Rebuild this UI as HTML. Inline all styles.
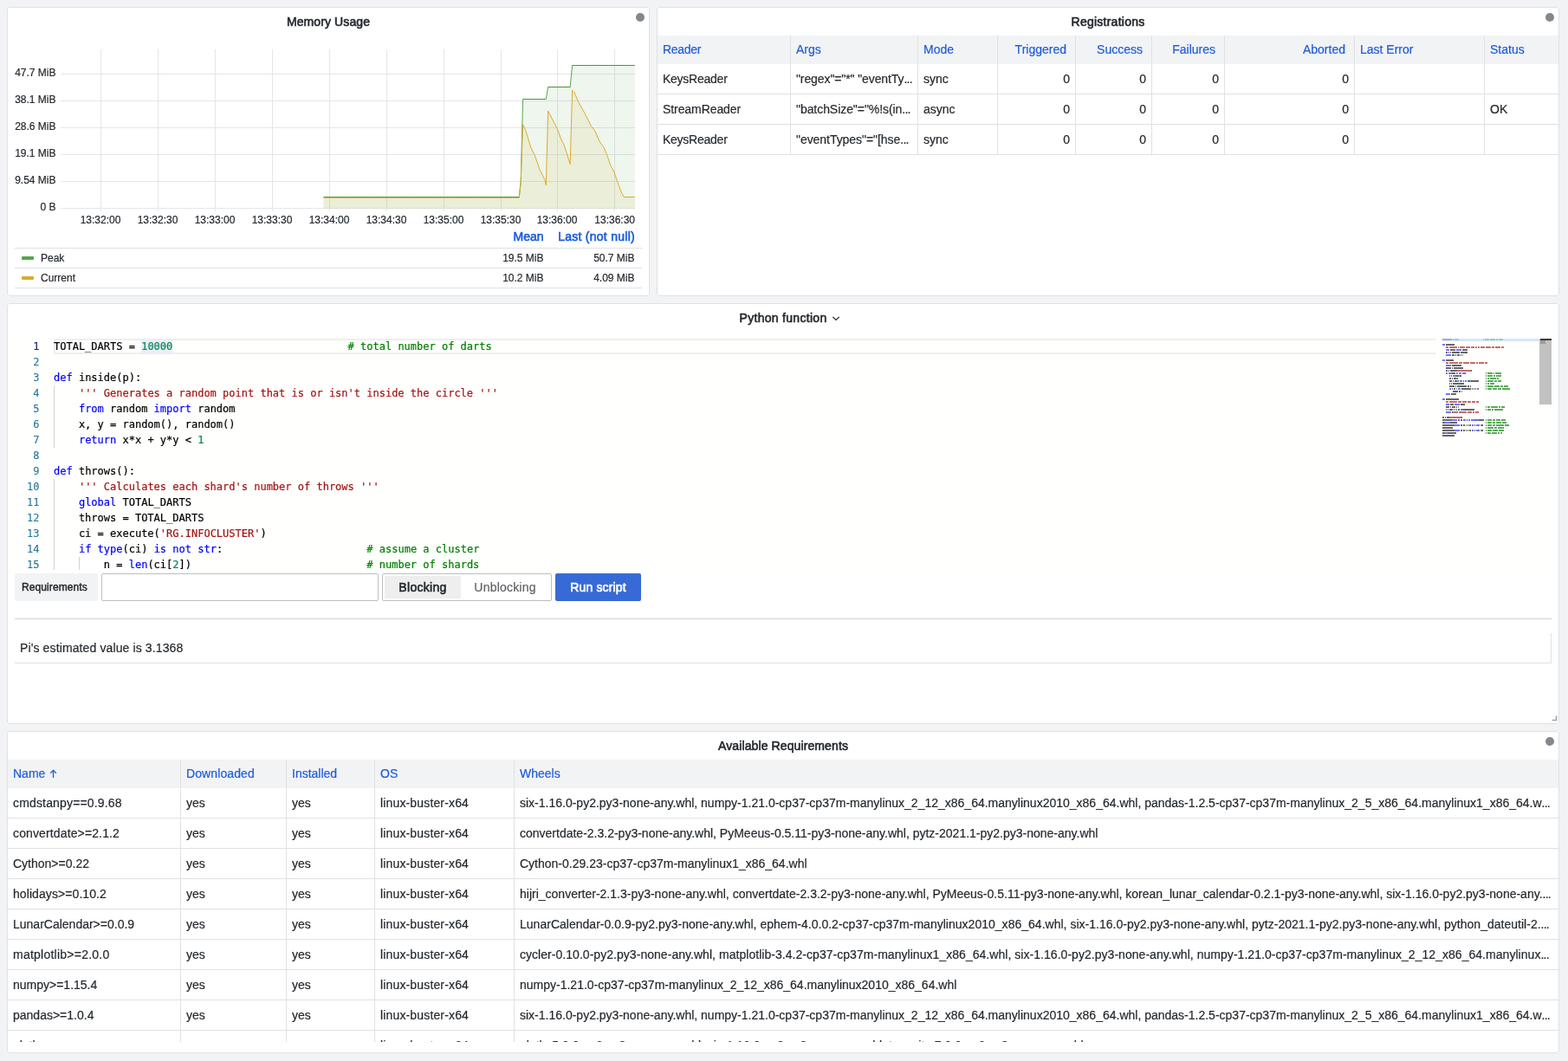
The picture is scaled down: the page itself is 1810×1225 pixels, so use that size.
<!DOCTYPE html>
<html lang="en">
<head>
<meta charset="utf-8">
<title>RedisGears Dashboard</title>
<style>
*{box-sizing:border-box}
html,body{margin:0;padding:0}
body{width:1810px;height:1225px;overflow:hidden;background:#f2f3f5;color:#24292e;
  font-family:"Liberation Sans",Arial,Helvetica,sans-serif;font-size:14px;position:relative;-webkit-text-stroke:0.2px}
.panel{position:absolute;will-change:transform;background:#fff;border:1px solid #dfe1e4;border-radius:3px;overflow:hidden}
.ptitle{position:absolute;left:0;right:0;top:0;height:35px;line-height:35px;text-align:center;font-size:14px;color:#24292e;white-space:nowrap}
.m{font-weight:normal;-webkit-text-stroke:0.6px}
.el{letter-spacing:-0.75px}
.dot{position:absolute;width:10px;height:10px;border-radius:50%;background:#84878b}
.abs{position:absolute;white-space:nowrap}
/* tables */
.tbl{position:absolute;left:0;right:0}
.th{position:absolute;top:0;height:33px;line-height:33px;color:#1d5cdb;font-size:14px;white-space:nowrap;overflow:hidden;padding:0 6px;border-right:1px solid #e0e1e3}
.thead{position:absolute;left:0;right:0;height:33px;background:#f2f3f5}
.tr{position:absolute;left:0;right:0;height:35px;border-bottom:1px solid #e0e1e3}
.td{position:absolute;top:0;height:35px;line-height:34px;font-size:14px;white-space:nowrap;overflow:hidden;padding:0 6px;border-right:1px solid #e0e1e3;color:#24292e}
.r{text-align:right}
.last{border-right:none}
/* code */
.code{font-family:"DejaVu Sans Mono","Liberation Mono",monospace;font-size:12px;line-height:18px;white-space:pre;color:#000;-webkit-text-stroke:0.2px}
.ln{position:absolute;left:0;width:37.5px;text-align:right;color:#237893;height:18px;-webkit-text-stroke:0.1px}
.cl{position:absolute;left:53px;height:18px}
.k{color:#0000ff}.s{color:#a31515}.c{color:#008000}.n{color:#098658}
.guide{position:absolute;width:1px;background:#d3d3d3}
</style>
</head>
<body>

<div class="panel" style="left:8px;top:8px;width:742px;height:334px;border:none">
<div class="ptitle m" style="letter-spacing:0.1px">Memory Usage</div>
<div class="dot" style="left:726px;top:7px"></div>
<svg class="abs" style="left:0;top:0" width="742" height="334" viewBox="8 8 742 334" font-family="Liberation Sans, Arial, sans-serif" font-size="12" fill="#24292e"><style>text{stroke:#24292e;stroke-width:0.2px}</style>
<g stroke="#e5e6ea" stroke-width="1" shape-rendering="crispEdges">
<line x1="116.5" y1="57" x2="116.5" y2="244"/>
<line x1="182.5" y1="57" x2="182.5" y2="244"/>
<line x1="248.5" y1="57" x2="248.5" y2="244"/>
<line x1="314.5" y1="57" x2="314.5" y2="244"/>
<line x1="380.5" y1="57" x2="380.5" y2="244"/>
<line x1="446.5" y1="57" x2="446.5" y2="244"/>
<line x1="512.5" y1="57" x2="512.5" y2="244"/>
<line x1="578.5" y1="57" x2="578.5" y2="244"/>
<line x1="643.5" y1="57" x2="643.5" y2="244"/>
<line x1="709.5" y1="57" x2="709.5" y2="244"/>
<line x1="70" y1="85.5" x2="733" y2="85.5"/>
<line x1="70" y1="116.5" x2="733" y2="116.5"/>
<line x1="70" y1="147.5" x2="733" y2="147.5"/>
<line x1="70" y1="178.5" x2="733" y2="178.5"/>
<line x1="70" y1="209.5" x2="733" y2="209.5"/>
<line x1="70" y1="240.5" x2="733" y2="240.5"/>
</g>
<path d="M373.5,240.5 L373.5,227.5 L599.3,227.5 L601.2,208.9 L603.6,114.5 L630.3,114.5 L632.7,100.5 L658.2,100.5 L660.6,75.5 L733,75.5 L733,240.5 Z" fill="#56a64b" fill-opacity="0.1"/>
<path d="M373.5,240.5 L373.5,228.3 L599.3,228.3 L601.2,210.5 L603.6,143.8 L606.3,149.2 L613.3,171.7 L617.1,178.7 L623.3,196.5 L628.8,207.4 L630.3,213.6 L632.7,128.2 L643.5,149.2 L647.4,160 L651.3,167.8 L658.2,189.5 L660.6,104.2 L662.9,106.5 L667.6,117.4 L675.3,131.4 L682.3,145.3 L686.2,150 L692.4,163.9 L697,170.1 L700.9,179.4 L704.8,191.1 L708.7,198 L714.1,213.6 L718,223.6 L720.3,227.5 L733,227.5 L733,240.5 Z" fill="#dcaa2c" fill-opacity="0.1"/>
<polyline points="373.5,227.5 599.3,227.5 601.2,208.9 603.6,114.5 630.3,114.5 632.7,100.5 658.2,100.5 660.6,75.5 733,75.5" fill="none" stroke="#56a64b" stroke-width="1" stroke-linejoin="round"/>
<polyline points="373.5,228.3 599.3,228.3 601.2,210.5 603.6,143.8 606.3,149.2 613.3,171.7 617.1,178.7 623.3,196.5 628.8,207.4 630.3,213.6 632.7,128.2 643.5,149.2 647.4,160 651.3,167.8 658.2,189.5 660.6,104.2 662.9,106.5 667.6,117.4 675.3,131.4 682.3,145.3 686.2,150 692.4,163.9 697,170.1 700.9,179.4 704.8,191.1 708.7,198 714.1,213.6 718,223.6 720.3,227.5 733,227.5" fill="none" stroke="#dcaa2c" stroke-width="1" stroke-linejoin="round"/>
<line x1="374" y1="227.5" x2="599" y2="227.5" stroke="#37872d" stroke-width="1" stroke-dasharray="1 1" shape-rendering="crispEdges"/>
<line x1="604" y1="114.5" x2="630" y2="114.5" stroke="#37872d" stroke-width="1" stroke-dasharray="1 1" shape-rendering="crispEdges"/>
<line x1="633" y1="100.5" x2="658" y2="100.5" stroke="#37872d" stroke-width="1" stroke-dasharray="1 1" shape-rendering="crispEdges"/>
<line x1="661" y1="75.5" x2="733" y2="75.5" stroke="#37872d" stroke-width="1" stroke-dasharray="1 1" shape-rendering="crispEdges"/>
<text x="64.5" y="87.9" text-anchor="end">47.7 MiB</text>
<text x="64.5" y="118.9" text-anchor="end">38.1 MiB</text>
<text x="64.5" y="149.9" text-anchor="end">28.6 MiB</text>
<text x="64.5" y="180.9" text-anchor="end">19.1 MiB</text>
<text x="64.5" y="211.9" text-anchor="end">9.54 MiB</text>
<text x="64.5" y="242.9" text-anchor="end">0 B</text>
<text x="116.0" y="257.8" text-anchor="middle">13:32:00</text>
<text x="182.0" y="257.8" text-anchor="middle">13:32:30</text>
<text x="248.0" y="257.8" text-anchor="middle">13:33:00</text>
<text x="314.0" y="257.8" text-anchor="middle">13:33:30</text>
<text x="380.0" y="257.8" text-anchor="middle">13:34:00</text>
<text x="446.0" y="257.8" text-anchor="middle">13:34:30</text>
<text x="512.0" y="257.8" text-anchor="middle">13:35:00</text>
<text x="578.0" y="257.8" text-anchor="middle">13:35:30</text>
<text x="643.0" y="257.8" text-anchor="middle">13:36:00</text>
<text x="733" y="257.8" text-anchor="end">13:36:30</text>
</svg>
<div class="abs m" style="right:17px;top:256px;height:18px;line-height:18px;font-size:14px;color:#1d5cdb;letter-spacing:0.27px">Last (not null)</div>
<div class="abs m" style="right:122.5px;top:256px;height:18px;line-height:18px;font-size:14px;color:#1d5cdb;letter-spacing:0">Mean</div>
<div class="abs" style="left:9px;width:724px;top:278px;height:24px;border-top:1px solid #e0e1e3;font-size:12px;line-height:23px"><span class="abs" style="left:8px;top:9px;width:14px;height:4px;border-radius:1px;background:#56a64b"></span><span class="abs" style="left:30px;top:0">Peak</span><span class="abs" style="right:113.5px;top:0">19.5 MiB</span><span class="abs" style="right:8.5px;top:0">50.7 MiB</span></div>
<div class="abs" style="left:9px;width:724px;top:301px;height:24px;border-top:1px solid #e0e1e3;border-bottom:1px solid #e0e1e3;font-size:12px;line-height:23px"><span class="abs" style="left:8px;top:9px;width:14px;height:4px;border-radius:1px;background:#dcaa2c"></span><span class="abs" style="left:30px;top:0">Current</span><span class="abs" style="right:113.5px;top:0">10.2 MiB</span><span class="abs" style="right:8.5px;top:0">4.09 MiB</span></div>
<div class="abs" style="left:0;top:0;width:742px;height:334px;border:1px solid #dfe1e4;border-radius:3px;pointer-events:none"></div>
</div>
<div class="panel" style="left:758px;top:8px;width:1042px;height:334px;border:none">
<div class="ptitle m" style="letter-spacing:0.25px">Registrations</div>
<div class="dot" style="left:1026px;top:7px"></div>
<div class="tbl" style="top:33px;height:138px;overflow:hidden">
<div class="thead">
<div class="th" style="left:1px;width:154px;"><span style="letter-spacing:-0.28px">Reader</span></div>
<div class="th" style="left:155px;width:147px;">Args</div>
<div class="th" style="left:302px;width:92px;">Mode</div>
<div class="th r" style="left:394px;width:90px;padding-right:10px;">Triggered</div>
<div class="th r" style="left:484px;width:88px;padding-right:10px;">Success</div>
<div class="th r" style="left:572px;width:84px;padding-right:10px;">Failures</div>
<div class="th r" style="left:656px;width:150px;padding-right:10px;">Aborted</div>
<div class="th" style="left:806px;width:150px;">Last Error</div>
<div class="th last" style="left:956px;width:85px;">Status</div>
</div>
<div class="tr" style="top:33px">
<div class="td" style="left:1px;width:154px"><span style="letter-spacing:-0.25px">KeysReader</span></div>
<div class="td" style="left:155px;width:147px"><span style="letter-spacing:-0.1px">"regex"="*" "eventTy</span><span class="el">...</span></div>
<div class="td" style="left:302px;width:92px">sync</div>
<div class="td r" style="left:394px;width:90px">0</div>
<div class="td r" style="left:484px;width:88px">0</div>
<div class="td r" style="left:572px;width:84px">0</div>
<div class="td r" style="left:656px;width:150px">0</div>
<div class="td" style="left:806px;width:150px"></div>
<div class="td last" style="left:956px;width:85px"></div>
</div>
<div class="tr" style="top:68px">
<div class="td" style="left:1px;width:154px"><span style="letter-spacing:-0.08px">StreamReader</span></div>
<div class="td" style="left:155px;width:147px"><span style="letter-spacing:-0.06px">"batchSize"="%!s(in</span><span class="el">...</span></div>
<div class="td" style="left:302px;width:92px">async</div>
<div class="td r" style="left:394px;width:90px">0</div>
<div class="td r" style="left:484px;width:88px">0</div>
<div class="td r" style="left:572px;width:84px">0</div>
<div class="td r" style="left:656px;width:150px">0</div>
<div class="td" style="left:806px;width:150px"></div>
<div class="td last" style="left:956px;width:85px">OK</div>
</div>
<div class="tr" style="top:103px">
<div class="td" style="left:1px;width:154px"><span style="letter-spacing:-0.25px">KeysReader</span></div>
<div class="td" style="left:155px;width:147px"><span style="letter-spacing:-0.05px">"eventTypes"="[hse</span><span class="el">...</span></div>
<div class="td" style="left:302px;width:92px">sync</div>
<div class="td r" style="left:394px;width:90px">0</div>
<div class="td r" style="left:484px;width:88px">0</div>
<div class="td r" style="left:572px;width:84px">0</div>
<div class="td r" style="left:656px;width:150px">0</div>
<div class="td" style="left:806px;width:150px"></div>
<div class="td last" style="left:956px;width:85px"></div>
</div>
</div>
<div class="abs" style="left:0;top:0;width:1042px;height:334px;border:1px solid #dfe1e4;border-radius:3px;pointer-events:none"></div>
</div>
<div class="panel" style="left:8px;top:350px;width:1792px;height:486px;border:none">
<div class="abs m" style="left:845.5px;top:0;height:35px;line-height:35px;font-size:14px;letter-spacing:0.3px">Python function</div>
<svg class="abs" style="left:951px;top:12px" width="12" height="12" viewBox="0 0 12 12"><path d="M2.3 3.9 L6 7.4 L9.7 3.9" fill="none" stroke="#24292e" stroke-width="1.3"/></svg>
<div class="abs code" style="left:0;top:41px;width:1783px;height:267px;overflow:hidden;background:#fffffe">
<div class="abs" style="left:54px;top:0;width:1595px;height:18px;border:2px solid #eeeeee;border-right:none"></div>
<div class="abs" style="left:155.2px;top:1px;width:36.2px;height:16px;background:#e9eff6"></div>
<div class="guide" style="left:54px;top:54px;height:72px"></div>
<div class="guide" style="left:54px;top:162px;height:108px"></div>
<div class="guide" style="left:83px;top:252px;height:18px"></div>
<div class="ln" style="top:0px;color:#0b216f">1</div><div class="cl" style="top:0px;left:54px">TOTAL_DARTS = <span class="n">10000</span>                            <span class="c"># total number of darts</span></div>
<div class="ln" style="top:18px">2</div><div class="cl" style="top:18px;left:54px"></div>
<div class="ln" style="top:36px">3</div><div class="cl" style="top:36px;left:54px"><span class="k">def</span> inside(p):</div>
<div class="ln" style="top:54px">4</div><div class="cl" style="top:54px;left:54px">    <span class="s">''' Generates a random point that is or isn't inside the circle '''</span></div>
<div class="ln" style="top:72px">5</div><div class="cl" style="top:72px;left:54px">    <span class="k">from</span> random <span class="k">import</span> random</div>
<div class="ln" style="top:90px">6</div><div class="cl" style="top:90px;left:54px">    x, y = random(), random()</div>
<div class="ln" style="top:108px">7</div><div class="cl" style="top:108px;left:54px">    <span class="k">return</span> x*x + y*y &lt; <span class="n">1</span></div>
<div class="ln" style="top:126px">8</div><div class="cl" style="top:126px;left:54px"></div>
<div class="ln" style="top:144px">9</div><div class="cl" style="top:144px;left:54px"><span class="k">def</span> throws():</div>
<div class="ln" style="top:162px">10</div><div class="cl" style="top:162px;left:54px">    <span class="s">''' Calculates each shard's number of throws '''</span></div>
<div class="ln" style="top:180px">11</div><div class="cl" style="top:180px;left:54px">    <span class="k">global</span> TOTAL_DARTS</div>
<div class="ln" style="top:198px">12</div><div class="cl" style="top:198px;left:54px">    throws = TOTAL_DARTS</div>
<div class="ln" style="top:216px">13</div><div class="cl" style="top:216px;left:54px">    ci = execute(<span class="s">'RG.INFOCLUSTER'</span>)</div>
<div class="ln" style="top:234px">14</div><div class="cl" style="top:234px;left:54px">    <span class="k">if</span> <span class="k">type</span>(ci) <span class="k">is</span> <span class="k">not</span> <span class="k">str</span>:                       <span class="c"># assume a cluster</span></div>
<div class="ln" style="top:252px">15</div><div class="cl" style="top:252px;left:54px">        n = <span class="k">len</span>(ci[<span class="n">2</span>])                            <span class="c"># number of shards</span></div>
</div>
<svg class="abs" style="left:1649px;top:41px" width="134" height="270" viewBox="1657 391 134 270" shape-rendering="crispEdges">
<rect x="1665" y="391" width="112" height="3" fill="#d6e7fb"/>
<rect x="1665" y="391" width="11" height="2" fill="#666666"/>
<rect x="1677" y="391" width="1" height="2" fill="#666666"/>
<rect x="1679" y="391" width="5" height="2" fill="#5aae94"/>
<rect x="1712" y="391" width="1" height="2" fill="#59a959"/>
<rect x="1714" y="391" width="5" height="2" fill="#59a959"/>
<rect x="1720" y="391" width="6" height="2" fill="#59a959"/>
<rect x="1727" y="391" width="2" height="2" fill="#59a959"/>
<rect x="1730" y="391" width="5" height="2" fill="#59a959"/>
<rect x="1665" y="397" width="3" height="2" fill="#7373ff"/>
<rect x="1669" y="397" width="6" height="2" fill="#666666"/>
<rect x="1675" y="397" width="1" height="2" fill="#666666"/>
<rect x="1676" y="397" width="1" height="2" fill="#666666"/>
<rect x="1677" y="397" width="1" height="2" fill="#666666"/>
<rect x="1678" y="397" width="1" height="2" fill="#666666"/>
<rect x="1669" y="400" width="3" height="2" fill="#c66b6b"/>
<rect x="1673" y="400" width="9" height="2" fill="#c66b6b"/>
<rect x="1683" y="400" width="1" height="2" fill="#c66b6b"/>
<rect x="1685" y="400" width="6" height="2" fill="#c66b6b"/>
<rect x="1692" y="400" width="5" height="2" fill="#c66b6b"/>
<rect x="1698" y="400" width="4" height="2" fill="#c66b6b"/>
<rect x="1703" y="400" width="2" height="2" fill="#c66b6b"/>
<rect x="1706" y="400" width="2" height="2" fill="#c66b6b"/>
<rect x="1709" y="400" width="5" height="2" fill="#c66b6b"/>
<rect x="1715" y="400" width="6" height="2" fill="#c66b6b"/>
<rect x="1722" y="400" width="3" height="2" fill="#c66b6b"/>
<rect x="1726" y="400" width="6" height="2" fill="#c66b6b"/>
<rect x="1733" y="400" width="3" height="2" fill="#c66b6b"/>
<rect x="1669" y="403" width="4" height="2" fill="#7373ff"/>
<rect x="1674" y="403" width="6" height="2" fill="#666666"/>
<rect x="1681" y="403" width="6" height="2" fill="#7373ff"/>
<rect x="1688" y="403" width="6" height="2" fill="#666666"/>
<rect x="1669" y="406" width="1" height="2" fill="#666666"/>
<rect x="1670" y="406" width="1" height="2" fill="#666666"/>
<rect x="1672" y="406" width="1" height="2" fill="#666666"/>
<rect x="1674" y="406" width="1" height="2" fill="#666666"/>
<rect x="1676" y="406" width="6" height="2" fill="#666666"/>
<rect x="1682" y="406" width="1" height="2" fill="#666666"/>
<rect x="1683" y="406" width="1" height="2" fill="#666666"/>
<rect x="1684" y="406" width="1" height="2" fill="#666666"/>
<rect x="1686" y="406" width="6" height="2" fill="#666666"/>
<rect x="1692" y="406" width="1" height="2" fill="#666666"/>
<rect x="1693" y="406" width="1" height="2" fill="#666666"/>
<rect x="1669" y="409" width="6" height="2" fill="#7373ff"/>
<rect x="1676" y="409" width="1" height="2" fill="#666666"/>
<rect x="1677" y="409" width="1" height="2" fill="#666666"/>
<rect x="1678" y="409" width="1" height="2" fill="#666666"/>
<rect x="1680" y="409" width="1" height="2" fill="#666666"/>
<rect x="1682" y="409" width="1" height="2" fill="#666666"/>
<rect x="1683" y="409" width="1" height="2" fill="#666666"/>
<rect x="1684" y="409" width="1" height="2" fill="#666666"/>
<rect x="1686" y="409" width="1" height="2" fill="#666666"/>
<rect x="1688" y="409" width="1" height="2" fill="#5aae94"/>
<rect x="1665" y="415" width="3" height="2" fill="#7373ff"/>
<rect x="1669" y="415" width="6" height="2" fill="#666666"/>
<rect x="1675" y="415" width="1" height="2" fill="#666666"/>
<rect x="1676" y="415" width="1" height="2" fill="#666666"/>
<rect x="1677" y="415" width="1" height="2" fill="#666666"/>
<rect x="1669" y="418" width="3" height="2" fill="#c66b6b"/>
<rect x="1673" y="418" width="10" height="2" fill="#c66b6b"/>
<rect x="1684" y="418" width="4" height="2" fill="#c66b6b"/>
<rect x="1689" y="418" width="7" height="2" fill="#c66b6b"/>
<rect x="1697" y="418" width="6" height="2" fill="#c66b6b"/>
<rect x="1704" y="418" width="2" height="2" fill="#c66b6b"/>
<rect x="1707" y="418" width="6" height="2" fill="#c66b6b"/>
<rect x="1714" y="418" width="3" height="2" fill="#c66b6b"/>
<rect x="1669" y="421" width="6" height="2" fill="#7373ff"/>
<rect x="1676" y="421" width="11" height="2" fill="#666666"/>
<rect x="1669" y="424" width="6" height="2" fill="#666666"/>
<rect x="1676" y="424" width="1" height="2" fill="#666666"/>
<rect x="1678" y="424" width="11" height="2" fill="#666666"/>
<rect x="1669" y="427" width="2" height="2" fill="#666666"/>
<rect x="1672" y="427" width="1" height="2" fill="#666666"/>
<rect x="1674" y="427" width="7" height="2" fill="#666666"/>
<rect x="1681" y="427" width="1" height="2" fill="#666666"/>
<rect x="1682" y="427" width="16" height="2" fill="#c66b6b"/>
<rect x="1698" y="427" width="1" height="2" fill="#666666"/>
<rect x="1669" y="430" width="2" height="2" fill="#7373ff"/>
<rect x="1672" y="430" width="4" height="2" fill="#7373ff"/>
<rect x="1676" y="430" width="1" height="2" fill="#666666"/>
<rect x="1677" y="430" width="2" height="2" fill="#666666"/>
<rect x="1679" y="430" width="1" height="2" fill="#666666"/>
<rect x="1681" y="430" width="2" height="2" fill="#7373ff"/>
<rect x="1684" y="430" width="3" height="2" fill="#7373ff"/>
<rect x="1688" y="430" width="3" height="2" fill="#7373ff"/>
<rect x="1691" y="430" width="1" height="2" fill="#666666"/>
<rect x="1715" y="430" width="1" height="2" fill="#59a959"/>
<rect x="1717" y="430" width="6" height="2" fill="#59a959"/>
<rect x="1724" y="430" width="1" height="2" fill="#59a959"/>
<rect x="1726" y="430" width="7" height="2" fill="#59a959"/>
<rect x="1673" y="433" width="1" height="2" fill="#666666"/>
<rect x="1675" y="433" width="1" height="2" fill="#666666"/>
<rect x="1677" y="433" width="3" height="2" fill="#7373ff"/>
<rect x="1680" y="433" width="1" height="2" fill="#666666"/>
<rect x="1681" y="433" width="2" height="2" fill="#666666"/>
<rect x="1683" y="433" width="1" height="2" fill="#666666"/>
<rect x="1684" y="433" width="1" height="2" fill="#5aae94"/>
<rect x="1685" y="433" width="1" height="2" fill="#666666"/>
<rect x="1686" y="433" width="1" height="2" fill="#666666"/>
<rect x="1715" y="433" width="1" height="2" fill="#59a959"/>
<rect x="1717" y="433" width="6" height="2" fill="#59a959"/>
<rect x="1724" y="433" width="2" height="2" fill="#59a959"/>
<rect x="1727" y="433" width="6" height="2" fill="#59a959"/>
<rect x="1673" y="436" width="2" height="2" fill="#666666"/>
<rect x="1676" y="436" width="1" height="2" fill="#666666"/>
<rect x="1678" y="436" width="2" height="2" fill="#666666"/>
<rect x="1680" y="436" width="1" height="2" fill="#666666"/>
<rect x="1681" y="436" width="1" height="2" fill="#5aae94"/>
<rect x="1682" y="436" width="1" height="2" fill="#666666"/>
<rect x="1715" y="436" width="1" height="2" fill="#59a959"/>
<rect x="1717" y="436" width="2" height="2" fill="#59a959"/>
<rect x="1720" y="436" width="7" height="2" fill="#59a959"/>
<rect x="1728" y="436" width="2" height="2" fill="#59a959"/>
<rect x="1673" y="439" width="3" height="2" fill="#666666"/>
<rect x="1677" y="439" width="1" height="2" fill="#666666"/>
<rect x="1679" y="439" width="1" height="2" fill="#666666"/>
<rect x="1680" y="439" width="1" height="2" fill="#666666"/>
<rect x="1681" y="439" width="1" height="2" fill="#666666"/>
<rect x="1682" y="439" width="1" height="2" fill="#5aae94"/>
<rect x="1683" y="439" width="1" height="2" fill="#666666"/>
<rect x="1685" y="439" width="3" height="2" fill="#7373ff"/>
<rect x="1689" y="439" width="1" height="2" fill="#666666"/>
<rect x="1691" y="439" width="2" height="2" fill="#7373ff"/>
<rect x="1694" y="439" width="2" height="2" fill="#666666"/>
<rect x="1696" y="439" width="1" height="2" fill="#666666"/>
<rect x="1697" y="439" width="1" height="2" fill="#5aae94"/>
<rect x="1698" y="439" width="1" height="2" fill="#666666"/>
<rect x="1699" y="439" width="1" height="2" fill="#666666"/>
<rect x="1700" y="439" width="1" height="2" fill="#666666"/>
<rect x="1701" y="439" width="4" height="2" fill="#666666"/>
<rect x="1705" y="439" width="1" height="2" fill="#666666"/>
<rect x="1706" y="439" width="1" height="2" fill="#666666"/>
<rect x="1715" y="439" width="1" height="2" fill="#59a959"/>
<rect x="1717" y="439" width="7" height="2" fill="#59a959"/>
<rect x="1725" y="439" width="3" height="2" fill="#59a959"/>
<rect x="1729" y="439" width="4" height="2" fill="#59a959"/>
<rect x="1673" y="442" width="1" height="2" fill="#666666"/>
<rect x="1675" y="442" width="1" height="2" fill="#666666"/>
<rect x="1677" y="442" width="3" height="2" fill="#666666"/>
<rect x="1680" y="442" width="1" height="2" fill="#666666"/>
<rect x="1681" y="442" width="5" height="2" fill="#666666"/>
<rect x="1686" y="442" width="1" height="2" fill="#666666"/>
<rect x="1687" y="442" width="2" height="2" fill="#666666"/>
<rect x="1689" y="442" width="1" height="2" fill="#666666"/>
<rect x="1715" y="442" width="1" height="2" fill="#59a959"/>
<rect x="1717" y="442" width="2" height="2" fill="#59a959"/>
<rect x="1720" y="442" width="5" height="2" fill="#59a959"/>
<rect x="1673" y="445" width="6" height="2" fill="#666666"/>
<rect x="1680" y="445" width="1" height="2" fill="#666666"/>
<rect x="1682" y="445" width="11" height="2" fill="#666666"/>
<rect x="1694" y="445" width="1" height="2" fill="#666666"/>
<rect x="1695" y="445" width="1" height="2" fill="#666666"/>
<rect x="1697" y="445" width="1" height="2" fill="#666666"/>
<rect x="1715" y="445" width="1" height="2" fill="#59a959"/>
<rect x="1717" y="445" width="7" height="2" fill="#59a959"/>
<rect x="1725" y="445" width="6" height="2" fill="#59a959"/>
<rect x="1732" y="445" width="3" height="2" fill="#59a959"/>
<rect x="1736" y="445" width="5" height="2" fill="#59a959"/>
<rect x="1673" y="448" width="2" height="2" fill="#7373ff"/>
<rect x="1676" y="448" width="1" height="2" fill="#666666"/>
<rect x="1678" y="448" width="1" height="2" fill="#666666"/>
<rect x="1679" y="448" width="1" height="2" fill="#666666"/>
<rect x="1681" y="448" width="1" height="2" fill="#5aae94"/>
<rect x="1683" y="448" width="3" height="2" fill="#7373ff"/>
<rect x="1687" y="448" width="11" height="2" fill="#666666"/>
<rect x="1699" y="448" width="1" height="2" fill="#666666"/>
<rect x="1701" y="448" width="1" height="2" fill="#666666"/>
<rect x="1703" y="448" width="1" height="2" fill="#666666"/>
<rect x="1705" y="448" width="1" height="2" fill="#5aae94"/>
<rect x="1706" y="448" width="1" height="2" fill="#666666"/>
<rect x="1715" y="448" width="1" height="2" fill="#59a959"/>
<rect x="1717" y="448" width="5" height="2" fill="#59a959"/>
<rect x="1723" y="448" width="5" height="2" fill="#59a959"/>
<rect x="1729" y="448" width="4" height="2" fill="#59a959"/>
<rect x="1734" y="448" width="9" height="2" fill="#59a959"/>
<rect x="1677" y="451" width="6" height="2" fill="#666666"/>
<rect x="1684" y="451" width="1" height="2" fill="#666666"/>
<rect x="1685" y="451" width="1" height="2" fill="#666666"/>
<rect x="1687" y="451" width="1" height="2" fill="#5aae94"/>
<rect x="1669" y="454" width="5" height="2" fill="#7373ff"/>
<rect x="1675" y="454" width="6" height="2" fill="#666666"/>
<rect x="1665" y="460" width="3" height="2" fill="#7373ff"/>
<rect x="1669" y="460" width="8" height="2" fill="#666666"/>
<rect x="1677" y="460" width="1" height="2" fill="#666666"/>
<rect x="1678" y="460" width="4" height="2" fill="#666666"/>
<rect x="1682" y="460" width="1" height="2" fill="#666666"/>
<rect x="1683" y="460" width="1" height="2" fill="#666666"/>
<rect x="1669" y="463" width="3" height="2" fill="#c66b6b"/>
<rect x="1673" y="463" width="9" height="2" fill="#c66b6b"/>
<rect x="1683" y="463" width="4" height="2" fill="#c66b6b"/>
<rect x="1688" y="463" width="5" height="2" fill="#c66b6b"/>
<rect x="1694" y="463" width="4" height="2" fill="#c66b6b"/>
<rect x="1699" y="463" width="4" height="2" fill="#c66b6b"/>
<rect x="1704" y="463" width="3" height="2" fill="#c66b6b"/>
<rect x="1669" y="466" width="4" height="2" fill="#7373ff"/>
<rect x="1674" y="466" width="4" height="2" fill="#666666"/>
<rect x="1679" y="466" width="6" height="2" fill="#7373ff"/>
<rect x="1686" y="466" width="5" height="2" fill="#666666"/>
<rect x="1669" y="469" width="4" height="2" fill="#666666"/>
<rect x="1674" y="469" width="1" height="2" fill="#666666"/>
<rect x="1676" y="469" width="4" height="2" fill="#666666"/>
<rect x="1681" y="469" width="1" height="2" fill="#666666"/>
<rect x="1683" y="469" width="1" height="2" fill="#5aae94"/>
<rect x="1715" y="469" width="1" height="2" fill="#59a959"/>
<rect x="1717" y="469" width="3" height="2" fill="#59a959"/>
<rect x="1721" y="469" width="8" height="2" fill="#59a959"/>
<rect x="1730" y="469" width="2" height="2" fill="#59a959"/>
<rect x="1733" y="469" width="4" height="2" fill="#59a959"/>
<rect x="1669" y="472" width="1" height="2" fill="#666666"/>
<rect x="1671" y="472" width="1" height="2" fill="#666666"/>
<rect x="1673" y="472" width="4" height="2" fill="#666666"/>
<rect x="1678" y="472" width="1" height="2" fill="#666666"/>
<rect x="1680" y="472" width="2" height="2" fill="#5aae94"/>
<rect x="1683" y="472" width="1" height="2" fill="#666666"/>
<rect x="1684" y="472" width="1" height="2" fill="#666666"/>
<rect x="1686" y="472" width="3" height="2" fill="#7373ff"/>
<rect x="1689" y="472" width="1" height="2" fill="#666666"/>
<rect x="1690" y="472" width="5" height="2" fill="#666666"/>
<rect x="1695" y="472" width="1" height="2" fill="#666666"/>
<rect x="1696" y="472" width="4" height="2" fill="#666666"/>
<rect x="1700" y="472" width="1" height="2" fill="#666666"/>
<rect x="1701" y="472" width="1" height="2" fill="#666666"/>
<rect x="1715" y="472" width="1" height="2" fill="#59a959"/>
<rect x="1717" y="472" width="4" height="2" fill="#59a959"/>
<rect x="1722" y="472" width="2" height="2" fill="#59a959"/>
<rect x="1725" y="472" width="10" height="2" fill="#59a959"/>
<rect x="1669" y="475" width="6" height="2" fill="#7373ff"/>
<rect x="1676" y="475" width="1" height="2" fill="#666666"/>
<rect x="1677" y="475" width="6" height="2" fill="#c66b6b"/>
<rect x="1684" y="475" width="9" height="2" fill="#c66b6b"/>
<rect x="1694" y="475" width="5" height="2" fill="#c66b6b"/>
<rect x="1700" y="475" width="2" height="2" fill="#c66b6b"/>
<rect x="1703" y="475" width="4" height="2" fill="#c66b6b"/>
<rect x="1665" y="481" width="2" height="2" fill="#666666"/>
<rect x="1668" y="481" width="1" height="2" fill="#666666"/>
<rect x="1670" y="481" width="2" height="2" fill="#666666"/>
<rect x="1672" y="481" width="1" height="2" fill="#666666"/>
<rect x="1673" y="481" width="14" height="2" fill="#c66b6b"/>
<rect x="1687" y="481" width="1" height="2" fill="#666666"/>
<rect x="1665" y="484" width="2" height="2" fill="#666666"/>
<rect x="1667" y="484" width="1" height="2" fill="#666666"/>
<rect x="1668" y="484" width="7" height="2" fill="#666666"/>
<rect x="1675" y="484" width="1" height="2" fill="#666666"/>
<rect x="1676" y="484" width="6" height="2" fill="#7373ff"/>
<rect x="1683" y="484" width="1" height="2" fill="#666666"/>
<rect x="1684" y="484" width="1" height="2" fill="#666666"/>
<rect x="1686" y="484" width="1" height="2" fill="#666666"/>
<rect x="1687" y="484" width="1" height="2" fill="#666666"/>
<rect x="1689" y="484" width="3" height="2" fill="#7373ff"/>
<rect x="1693" y="484" width="1" height="2" fill="#666666"/>
<rect x="1695" y="484" width="2" height="2" fill="#7373ff"/>
<rect x="1698" y="484" width="5" height="2" fill="#7373ff"/>
<rect x="1703" y="484" width="1" height="2" fill="#666666"/>
<rect x="1704" y="484" width="3" height="2" fill="#7373ff"/>
<rect x="1707" y="484" width="1" height="2" fill="#666666"/>
<rect x="1708" y="484" width="1" height="2" fill="#666666"/>
<rect x="1709" y="484" width="1" height="2" fill="#666666"/>
<rect x="1710" y="484" width="1" height="2" fill="#666666"/>
<rect x="1711" y="484" width="1" height="2" fill="#666666"/>
<rect x="1712" y="484" width="1" height="2" fill="#666666"/>
<rect x="1715" y="484" width="1" height="2" fill="#59a959"/>
<rect x="1717" y="484" width="5" height="2" fill="#59a959"/>
<rect x="1723" y="484" width="3" height="2" fill="#59a959"/>
<rect x="1727" y="484" width="5" height="2" fill="#59a959"/>
<rect x="1733" y="484" width="5" height="2" fill="#59a959"/>
<rect x="1665" y="487" width="2" height="2" fill="#666666"/>
<rect x="1667" y="487" width="1" height="2" fill="#666666"/>
<rect x="1668" y="487" width="6" height="2" fill="#7373ff"/>
<rect x="1674" y="487" width="1" height="2" fill="#666666"/>
<rect x="1675" y="487" width="6" height="2" fill="#666666"/>
<rect x="1681" y="487" width="1" height="2" fill="#666666"/>
<rect x="1715" y="487" width="1" height="2" fill="#59a959"/>
<rect x="1717" y="487" width="5" height="2" fill="#59a959"/>
<rect x="1723" y="487" width="3" height="2" fill="#59a959"/>
<rect x="1727" y="487" width="6" height="2" fill="#59a959"/>
<rect x="1734" y="487" width="5" height="2" fill="#59a959"/>
<rect x="1665" y="490" width="2" height="2" fill="#666666"/>
<rect x="1667" y="490" width="1" height="2" fill="#666666"/>
<rect x="1668" y="490" width="10" height="2" fill="#666666"/>
<rect x="1678" y="490" width="1" height="2" fill="#666666"/>
<rect x="1679" y="490" width="6" height="2" fill="#7373ff"/>
<rect x="1686" y="490" width="1" height="2" fill="#666666"/>
<rect x="1687" y="490" width="1" height="2" fill="#666666"/>
<rect x="1689" y="490" width="1" height="2" fill="#666666"/>
<rect x="1690" y="490" width="1" height="2" fill="#666666"/>
<rect x="1692" y="490" width="1" height="2" fill="#5aae94"/>
<rect x="1694" y="490" width="1" height="2" fill="#666666"/>
<rect x="1696" y="490" width="1" height="2" fill="#666666"/>
<rect x="1697" y="490" width="1" height="2" fill="#666666"/>
<rect x="1699" y="490" width="2" height="2" fill="#7373ff"/>
<rect x="1702" y="490" width="1" height="2" fill="#666666"/>
<rect x="1704" y="490" width="4" height="2" fill="#7373ff"/>
<rect x="1709" y="490" width="1" height="2" fill="#5aae94"/>
<rect x="1710" y="490" width="1" height="2" fill="#666666"/>
<rect x="1711" y="490" width="1" height="2" fill="#666666"/>
<rect x="1715" y="490" width="1" height="2" fill="#59a959"/>
<rect x="1717" y="490" width="5" height="2" fill="#59a959"/>
<rect x="1723" y="490" width="3" height="2" fill="#59a959"/>
<rect x="1727" y="490" width="9" height="2" fill="#59a959"/>
<rect x="1737" y="490" width="5" height="2" fill="#59a959"/>
<rect x="1665" y="493" width="2" height="2" fill="#666666"/>
<rect x="1667" y="493" width="1" height="2" fill="#666666"/>
<rect x="1668" y="493" width="7" height="2" fill="#666666"/>
<rect x="1675" y="493" width="1" height="2" fill="#666666"/>
<rect x="1676" y="493" width="1" height="2" fill="#666666"/>
<rect x="1715" y="493" width="1" height="2" fill="#59a959"/>
<rect x="1717" y="493" width="7" height="2" fill="#59a959"/>
<rect x="1725" y="493" width="3" height="2" fill="#59a959"/>
<rect x="1729" y="493" width="7" height="2" fill="#59a959"/>
<rect x="1665" y="496" width="2" height="2" fill="#666666"/>
<rect x="1667" y="496" width="1" height="2" fill="#666666"/>
<rect x="1668" y="496" width="10" height="2" fill="#666666"/>
<rect x="1678" y="496" width="1" height="2" fill="#666666"/>
<rect x="1679" y="496" width="6" height="2" fill="#7373ff"/>
<rect x="1686" y="496" width="1" height="2" fill="#666666"/>
<rect x="1687" y="496" width="1" height="2" fill="#666666"/>
<rect x="1689" y="496" width="1" height="2" fill="#666666"/>
<rect x="1690" y="496" width="1" height="2" fill="#666666"/>
<rect x="1692" y="496" width="1" height="2" fill="#666666"/>
<rect x="1694" y="496" width="1" height="2" fill="#666666"/>
<rect x="1696" y="496" width="1" height="2" fill="#666666"/>
<rect x="1697" y="496" width="1" height="2" fill="#666666"/>
<rect x="1699" y="496" width="2" height="2" fill="#7373ff"/>
<rect x="1702" y="496" width="1" height="2" fill="#666666"/>
<rect x="1704" y="496" width="4" height="2" fill="#7373ff"/>
<rect x="1709" y="496" width="1" height="2" fill="#5aae94"/>
<rect x="1710" y="496" width="1" height="2" fill="#666666"/>
<rect x="1711" y="496" width="1" height="2" fill="#666666"/>
<rect x="1715" y="496" width="1" height="2" fill="#59a959"/>
<rect x="1717" y="496" width="5" height="2" fill="#59a959"/>
<rect x="1723" y="496" width="6" height="2" fill="#59a959"/>
<rect x="1730" y="496" width="6" height="2" fill="#59a959"/>
<rect x="1665" y="499" width="2" height="2" fill="#666666"/>
<rect x="1667" y="499" width="1" height="2" fill="#666666"/>
<rect x="1668" y="499" width="3" height="2" fill="#7373ff"/>
<rect x="1671" y="499" width="1" height="2" fill="#666666"/>
<rect x="1672" y="499" width="8" height="2" fill="#666666"/>
<rect x="1680" y="499" width="1" height="2" fill="#666666"/>
<rect x="1715" y="499" width="1" height="2" fill="#59a959"/>
<rect x="1717" y="499" width="4" height="2" fill="#59a959"/>
<rect x="1722" y="499" width="6" height="2" fill="#59a959"/>
<rect x="1729" y="499" width="2" height="2" fill="#59a959"/>
<rect x="1732" y="499" width="2" height="2" fill="#59a959"/>
<rect x="1665" y="502" width="2" height="2" fill="#666666"/>
<rect x="1667" y="502" width="1" height="2" fill="#666666"/>
<rect x="1668" y="502" width="3" height="2" fill="#666666"/>
<rect x="1671" y="502" width="1" height="2" fill="#666666"/>
<rect x="1672" y="502" width="6" height="2" fill="#666666"/>
<rect x="1678" y="502" width="1" height="2" fill="#666666"/>
<rect x="1665" y="391" width="112" height="3" fill="#d6e7fb" fill-opacity="0.55"/>
<rect x="1777" y="391" width="14" height="76" fill="#c1c1c1"/>
<rect x="1778" y="393" width="6" height="4" fill="#9c9c9c"/>
<rect x="1778" y="391" width="13" height="2" fill="#3a3a3a"/>
</svg>
<div class="abs m" style="left:9px;top:312px;width:96px;height:32px;line-height:32px;background:#f2f3f5;border-radius:2px;font-size:12px;padding-left:8px;letter-spacing:0.1px;-webkit-text-stroke:0.45px">Requirements</div>
<div class="abs" style="left:109px;top:312px;width:320px;height:32px;border:1px solid #bcbec0;border-radius:2px;background:#fff"></div>
<div class="abs" style="left:433px;top:312px;width:196px;height:32px;border:1px solid #bcbec0;border-radius:2px;background:#fff"><div class="abs m" style="left:2px;top:2px;width:88px;height:26px;line-height:26px;background:#eeeeef;border-radius:2px;text-align:center;letter-spacing:0.3px">Blocking</div><div class="abs" style="left:89px;top:2px;width:104px;height:26px;line-height:26px;text-align:center;color:#5e6266;letter-spacing:0.2px">Unblocking</div></div>
<div class="abs m" style="left:633px;top:312px;width:99px;height:32px;line-height:32px;background:#376ad6;border-radius:2px;color:#fff;text-align:center;letter-spacing:0.15px">Run script</div>
<div class="abs" style="left:9px;top:364px;width:1774px;height:1px;background:#cfd0d2"></div>
<div class="abs" style="left:9px;top:381px;width:1774px;height:35px;line-height:34px;border-right:1px solid #e0e1e3;border-bottom:1px solid #e0e1e3;padding-left:6px;letter-spacing:0.12px">Pi&#39;s estimated value is 3.1368</div>
<svg class="abs" style="left:1782px;top:475px" width="9" height="9" viewBox="0 0 9 9"><path d="M6.5 1.5 V6.5 H1.5" fill="none" stroke="#a3a3a3" stroke-width="1.6"/></svg>
<div class="abs" style="left:0;top:0;width:1792px;height:486px;border:1px solid #dfe1e4;border-radius:3px;pointer-events:none"></div>
</div>
<div class="panel" style="left:8px;top:844px;width:1792px;height:372px;border:none">
<div class="ptitle m" style="letter-spacing:0.11px">Available Requirements</div>
<div class="dot" style="left:1776px;top:7px"></div>
<div class="tbl" style="top:33px;height:326px;overflow:hidden">
<div class="thead">
<div class="th" style="left:1px;width:200px;">Name<svg width="9" height="11" viewBox="0 0 9 11" style="margin-left:5px;vertical-align:-0.5px"><path d="M4.5 10 V1.6 M1.2 4.7 L4.5 1.4 L7.8 4.7" fill="none" stroke="#1d5cdb" stroke-width="1.3"/></svg></div>
<div class="th" style="left:201px;width:122px;"><span style="letter-spacing:0.1px">Downloaded</span></div>
<div class="th" style="left:323px;width:102px;">Installed</div>
<div class="th" style="left:425px;width:161px;">OS</div>
<div class="th last" style="left:586px;width:1205px;">Wheels</div>
</div>
<div class="tr" style="top:33px">
<div class="td" style="left:1px;width:200px"><span style="letter-spacing:0.16px">cmdstanpy==0.9.68</span></div>
<div class="td" style="left:201px;width:122px">yes</div>
<div class="td" style="left:323px;width:102px">yes</div>
<div class="td" style="left:425px;width:161px"><span style="letter-spacing:0.15px">linux-buster-x64</span></div>
<div class="td last" style="left:586px;width:1205px">six-1.16.0-py2.py3-none-any.whl, numpy-1.21.0-cp37-cp37m-manylinux_2_12_x86_64.manylinux2010_x86_64.whl, pandas-1.2.5-cp37-cp37m-manylinux_2_5_x86_64.manylinux1_x86_64.w<span class="el">...</span></div>
</div>
<div class="tr" style="top:68px">
<div class="td" style="left:1px;width:200px"><span style="letter-spacing:0.13px">convertdate&gt;=2.1.2</span></div>
<div class="td" style="left:201px;width:122px">yes</div>
<div class="td" style="left:323px;width:102px">yes</div>
<div class="td" style="left:425px;width:161px"><span style="letter-spacing:0.15px">linux-buster-x64</span></div>
<div class="td last" style="left:586px;width:1205px">convertdate-2.3.2-py3-none-any.whl, PyMeeus-0.5.11-py3-none-any.whl, pytz-2021.1-py2.py3-none-any.whl</div>
</div>
<div class="tr" style="top:103px">
<div class="td" style="left:1px;width:200px">Cython&gt;=0.22</div>
<div class="td" style="left:201px;width:122px">yes</div>
<div class="td" style="left:323px;width:102px">yes</div>
<div class="td" style="left:425px;width:161px"><span style="letter-spacing:0.15px">linux-buster-x64</span></div>
<div class="td last" style="left:586px;width:1205px">Cython-0.29.23-cp37-cp37m-manylinux1_x86_64.whl</div>
</div>
<div class="tr" style="top:138px">
<div class="td" style="left:1px;width:200px"><span style="letter-spacing:0.08px">holidays&gt;=0.10.2</span></div>
<div class="td" style="left:201px;width:122px">yes</div>
<div class="td" style="left:323px;width:102px">yes</div>
<div class="td" style="left:425px;width:161px"><span style="letter-spacing:0.15px">linux-buster-x64</span></div>
<div class="td last" style="left:586px;width:1205px">hijri_converter-2.1.3-py3-none-any.whl, convertdate-2.3.2-py3-none-any.whl, PyMeeus-0.5.11-py3-none-any.whl, korean_lunar_calendar-0.2.1-py3-none-any.whl, six-1.16.0-py2.py3-none-any.<span class="el">...</span></div>
</div>
<div class="tr" style="top:173px">
<div class="td" style="left:1px;width:200px">LunarCalendar&gt;=0.0.9</div>
<div class="td" style="left:201px;width:122px">yes</div>
<div class="td" style="left:323px;width:102px">yes</div>
<div class="td" style="left:425px;width:161px"><span style="letter-spacing:0.15px">linux-buster-x64</span></div>
<div class="td last" style="left:586px;width:1205px"><span style="letter-spacing:0.015px">LunarCalendar-0.0.9-py2.py3-none-any.whl, ephem-4.0.0.2-cp37-cp37m-manylinux2010_x86_64.whl, six-1.16.0-py2.py3-none-any.whl, pytz-2021.1-py2.py3-none-any.whl, python_dateutil-2.</span><span class="el">...</span></div>
</div>
<div class="tr" style="top:208px">
<div class="td" style="left:1px;width:200px"><span style="letter-spacing:0.24px">matplotlib&gt;=2.0.0</span></div>
<div class="td" style="left:201px;width:122px">yes</div>
<div class="td" style="left:323px;width:102px">yes</div>
<div class="td" style="left:425px;width:161px"><span style="letter-spacing:0.15px">linux-buster-x64</span></div>
<div class="td last" style="left:586px;width:1205px"><span style="letter-spacing:0.04px">cycler-0.10.0-py2.py3-none-any.whl, matplotlib-3.4.2-cp37-cp37m-manylinux1_x86_64.whl, six-1.16.0-py2.py3-none-any.whl, numpy-1.21.0-cp37-cp37m-manylinux_2_12_x86_64.manylinux</span><span class="el">...</span></div>
</div>
<div class="tr" style="top:243px">
<div class="td" style="left:1px;width:200px">numpy&gt;=1.15.4</div>
<div class="td" style="left:201px;width:122px">yes</div>
<div class="td" style="left:323px;width:102px">yes</div>
<div class="td" style="left:425px;width:161px"><span style="letter-spacing:0.15px">linux-buster-x64</span></div>
<div class="td last" style="left:586px;width:1205px">numpy-1.21.0-cp37-cp37m-manylinux_2_12_x86_64.manylinux2010_x86_64.whl</div>
</div>
<div class="tr" style="top:278px">
<div class="td" style="left:1px;width:200px">pandas&gt;=1.0.4</div>
<div class="td" style="left:201px;width:122px">yes</div>
<div class="td" style="left:323px;width:102px">yes</div>
<div class="td" style="left:425px;width:161px"><span style="letter-spacing:0.15px">linux-buster-x64</span></div>
<div class="td last" style="left:586px;width:1205px">six-1.16.0-py2.py3-none-any.whl, numpy-1.21.0-cp37-cp37m-manylinux_2_12_x86_64.manylinux2010_x86_64.whl, pandas-1.2.5-cp37-cp37m-manylinux_2_5_x86_64.manylinux1_x86_64.w<span class="el">...</span></div>
</div>
<div class="tr" style="top:313px">
<div class="td" style="left:1px;width:200px">plotly</div>
<div class="td" style="left:201px;width:122px">yes</div>
<div class="td" style="left:323px;width:102px">yes</div>
<div class="td" style="left:425px;width:161px"><span style="letter-spacing:0.15px">linux-buster-x64</span></div>
<div class="td last" style="left:586px;width:1205px">plotly-5.0.0-py2.py3-none-any.whl, six-1.16.0-py2.py3-none-any.whl, tenacity-7.0.0-py2.py3-none-any.whl</div>
</div>
</div>
<div class="abs" style="left:0;top:0;width:1792px;height:372px;border:1px solid #dfe1e4;border-radius:3px;pointer-events:none"></div>
</div>
</body>
</html>
